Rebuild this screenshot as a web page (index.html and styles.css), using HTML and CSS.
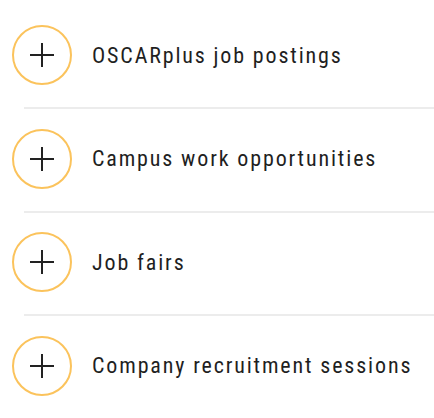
FILE: index.html
```html
<!doctype html>
<html lang="en">
<head>
    <meta charset="UTF-8" />
    <title>Career resources</title>
    <link rel="stylesheet" href="styles.css">
</head>
<body>
<ul class="list">
    <li>
        <span class="toggle">
            <svg viewBox="0 0 24 24" width="24" height="24"><path d="M12 0V24M0 12H24" /></svg>
        </span>
        <span class="label">OSCARplus job postings</span>
    </li>
    <li>
        <span class="toggle">
            <svg viewBox="0 0 24 24" width="24" height="24"><path d="M12 0V24M0 12H24" /></svg>
        </span>
        <span class="label">Campus work opportunities</span>
    </li>
    <li>
        <span class="toggle">
            <svg viewBox="0 0 24 24" width="24" height="24"><path d="M12 0V24M0 12H24" /></svg>
        </span>
        <span class="label">Job fairs</span>
    </li>
    <li>
        <span class="toggle">
            <svg viewBox="0 0 24 24" width="24" height="24"><path d="M12 0V24M0 12H24" /></svg>
        </span>
        <span class="label">Company recruitment sessions</span>
    </li>
</ul>
</body>
</html>
```

FILE: styles.css
```css
body{
    margin: 0;
    background: #fff;
    font-family: Roboto, "Liberation Sans", sans-serif;
}
.list{
    list-style: none;
    margin: 5.5px 0 0;
    padding: 0 0 0 24px;
}
.list li{
    display: flex;
    align-items: center;
    padding: 19.5px 0 22px;
    border-bottom: 2px solid #ececec;
}
.toggle{
    width: 60px;
    height: 60px;
    box-sizing: border-box;
    margin-left: -12px;
    border: 2px solid #fbc35c;
    border-radius: 50%;
    display: flex;
    align-items: center;
    justify-content: center;
    flex-shrink: 0;
}
.toggle svg{
    display: block;
}
.toggle path{
    stroke: #222;
    stroke-width: 2;
    fill: none;
}
.label{
    margin-left: 20px;
    font-size: 22px;
    font-stretch: 85%;
    letter-spacing: 1.85px;
    color: #1f1f1f;
}
```
